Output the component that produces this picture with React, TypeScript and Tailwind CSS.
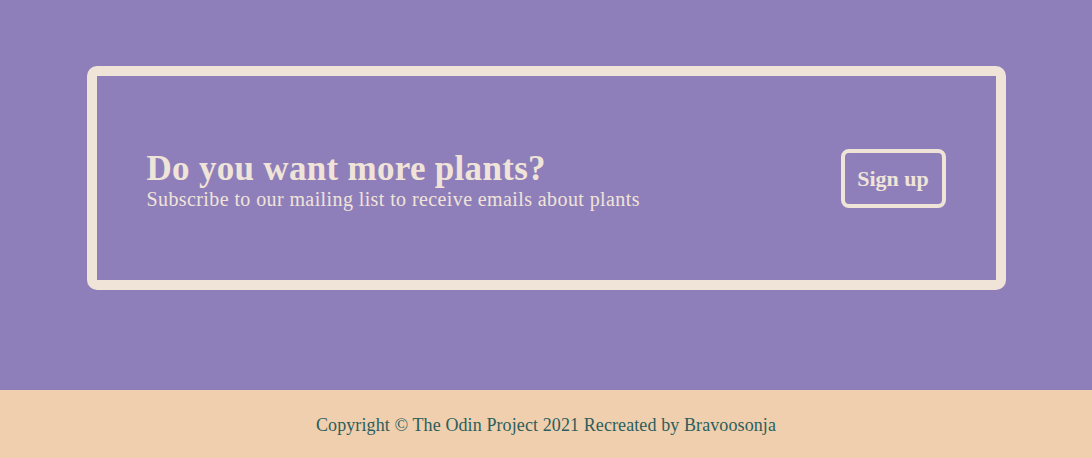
import React from 'react';

const serif = { fontFamily: '"Liberation Serif", "DejaVu Serif", serif' };

export default function App() {
  return (
    <div className="w-full min-h-[458px] flex flex-col" style={serif}>
      <section className="bg-[#8e7fba] pt-[66px] pb-[100px]">
        <div className="mx-auto w-[919px] h-[224px] border-[10px] border-[#f0e4d8] rounded-[10px] flex items-center justify-between px-[50px]">
          <div className="text-[#f0e4d8] pt-[6px]">
            <h2 className="text-[35px] font-bold leading-[36px] tracking-[0.3px]">Do you want more plants?</h2>
            <p className="text-[20px] leading-[24px] tracking-[0.4px]">Subscribe to our mailing list to receive emails about plants</p>
          </div>
          <button className="w-[105px] h-[59px] border-[4px] border-[#f0e4d8] rounded-[8px] text-[#f0e4d8] text-[22px] font-bold">
            Sign up
          </button>
        </div>
      </section>
      <footer className="bg-[#f0cfae] h-[68px] flex items-center justify-center">
        <p className="text-[#2c5e5c] text-[18px] tracking-[0.1px] pt-[2px]">Copyright © The Odin Project 2021 Recreated by Bravoosonja</p>
      </footer>
    </div>
  );
}
